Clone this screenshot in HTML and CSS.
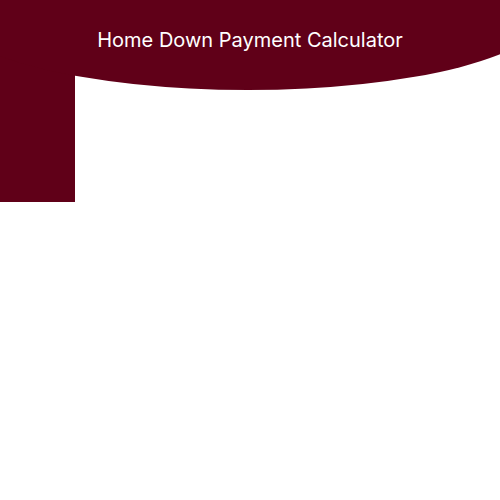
FILE: index.html
```html
<!DOCTYPE html>
<html lang="en">
<head>
<meta charset="utf-8">
<title>Home Down Payment Calculator</title>
<link rel="stylesheet" href="styles.css">
</head>
<body>
  <div class="layout">
    <header class="header">
      <h1 class="title">Home Down Payment Calculator</h1>
    </header>
    <aside class="sidebar"></aside>
    <main class="main"></main>
  </div>
</body>
</html>
```

FILE: styles.css
```css
html, body {
  margin: 0;
  padding: 0;
  background: #ffffff;
}

body {
  font-family: "Inter", "Liberation Sans", sans-serif;
}

.layout {
  display: grid;
  grid-template-columns: 75px 1fr;
  grid-template-rows: 90px 112px;
  width: 500px;
}

.header {
  grid-column: 1 / -1;
  grid-row: 1;
  height: 90px;
  background: #600018;
  clip-path: ellipse(300px 78px at 248px 12px);
  z-index: 1;
  display: flex;
  justify-content: center;
  padding-top: 28px;
  box-sizing: border-box;
}

.title {
  margin: 0;
  font-size: 20px;
  font-weight: 400;
  line-height: 24px;
  color: #ffffff;
}

.sidebar {
  grid-column: 1;
  grid-row: 1 / 3;
  background: #600018;
}

.main {
  grid-column: 2;
  grid-row: 2;
}
```
